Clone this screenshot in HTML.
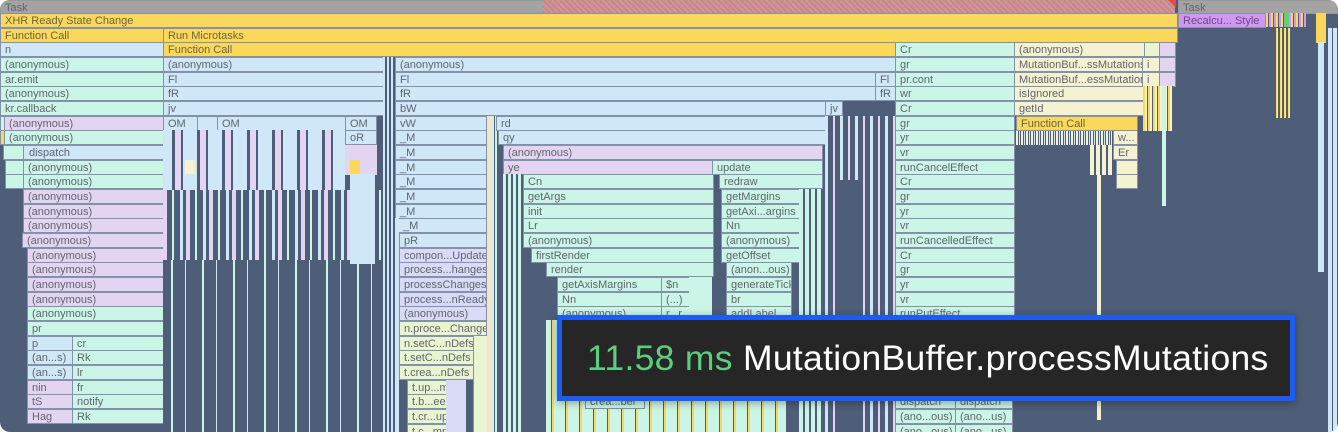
<!DOCTYPE html>
<html><head><meta charset="utf-8"><style>
html,body{margin:0;padding:0;background:#fff;}
#w{position:relative;width:1338px;height:432px;overflow:hidden;border-radius:10px;background:#4f5e78;}
.c{position:absolute;height:15px;box-sizing:border-box;border:1px solid #8392a9;font:11px "Liberation Sans",sans-serif;color:#60666e;line-height:14px;padding-left:4px;white-space:nowrap;overflow:hidden}
.g{background:#cbf5e6}.b{background:#cfe7f6}.p{background:#e3d5f1}.y{background:#fad85c;color:#6e6440}
.py{background:#f5f2d2}.l{background:#d9dbf6}.yg{background:#e9f4d0}.o{background:#f4e3c8}
.s{position:absolute;}
</style></head><body><div id="w">
<div class="c" style="left:0;top:0;width:545px;height:14px;background:#a3a3a3;border-color:#999">Task</div>
<div class="s" style="left:543px;top:0;width:632px;height:13px;background:repeating-linear-gradient(45deg,#c7878a 0 2px,#cf9597 2px 4px)"></div>
<div class="s" style="left:1168px;top:0;width:0;height:0;border-left:8px solid transparent;border-top:8px solid #e84848;"></div>
<div class="c" style="left:1178px;top:0;width:160px;height:14px;background:#a3a3a3;border-color:#999">Task</div>
<div class="c y" style="left:0;top:13px;width:1178px">XHR Ready State Change</div>
<div class="c y" style="left:0;top:28px;width:165px">Function Call</div>
<div class="c y" style="left:163px;top:28px;width:1015px">Run Microtasks</div>
<div class="c b" style="left:0;top:42px;width:165px">n</div>
<div class="c y" style="left:163px;top:42px;width:734px">Function Call</div>
<div class="c g" style="left:0;top:57px;width:165px">(anonymous)</div>
<div class="c g" style="left:0;top:72px;width:165px">ar.emit</div>
<div class="c g" style="left:0;top:86px;width:165px">(anonymous)</div>
<div class="c g" style="left:0;top:101px;width:165px">kr.callback</div>
<div class="c g" style="left:0;top:116px;width:6px"></div>
<div class="c p" style="left:4px;top:116px;width:161px">(anonymous)</div>
<div class="c y" style="left:0;top:130px;width:5px"></div>
<div class="c g" style="left:4px;top:130px;width:161px">(anonymous)</div>
<div class="c g" style="left:3px;top:145px;width:22px"></div>
<div class="c b" style="left:23px;top:145px;width:142px;padding-left:5px">dispatch</div>
<div class="c g" style="left:5px;top:160px;width:20px"></div>
<div class="c g" style="left:5px;top:174px;width:20px"></div>
<div class="c g" style="left:23px;top:160px;width:142px">(anonymous)</div>
<div class="c g" style="left:23px;top:174px;width:142px">(anonymous)</div>
<div class="c p" style="left:23px;top:189px;width:142px">(anonymous)</div>
<div class="c p" style="left:23px;top:204px;width:142px">(anonymous)</div>
<div class="c p" style="left:23px;top:218px;width:142px">(anonymous)</div>
<div class="c p" style="left:22px;top:233px;width:143px">(anonymous)</div>
<div class="c p" style="left:27px;top:248px;width:138px">(anonymous)</div>
<div class="c p" style="left:27px;top:262px;width:138px">(anonymous)</div>
<div class="c p" style="left:27px;top:277px;width:138px">(anonymous)</div>
<div class="c p" style="left:27px;top:292px;width:138px">(anonymous)</div>
<div class="c g" style="left:27px;top:306px;width:138px">(anonymous)</div>
<div class="c g" style="left:27px;top:321px;width:138px">pr</div>
<div class="c b" style="left:27px;top:336px;width:47px">p</div>
<div class="c g" style="left:72px;top:336px;width:93px">cr</div>
<div class="c b" style="left:27px;top:350px;width:47px">(an...s)</div>
<div class="c g" style="left:72px;top:350px;width:93px">Rk</div>
<div class="c b" style="left:27px;top:365px;width:47px">(an...s)</div>
<div class="c g" style="left:72px;top:365px;width:93px">lr</div>
<div class="c p" style="left:27px;top:380px;width:47px">nin</div>
<div class="c g" style="left:72px;top:380px;width:93px">fr</div>
<div class="c p" style="left:27px;top:394px;width:47px">tS</div>
<div class="c g" style="left:72px;top:394px;width:93px">notify</div>
<div class="c p" style="left:27px;top:409px;width:47px">Hag</div>
<div class="c g" style="left:72px;top:409px;width:93px">Rk</div>
<div class="c b" style="left:163px;top:57px;width:222px">(anonymous)</div>
<div class="c b" style="left:163px;top:72px;width:222px">Fl</div>
<div class="c b" style="left:163px;top:86px;width:222px">fR</div>
<div class="c b" style="left:163px;top:101px;width:222px">jv</div>
<div class="c b" style="left:163px;top:116px;width:36px">OM</div>
<div class="c b" style="left:197px;top:116px;width:22px"></div>
<div class="c b" style="left:217px;top:116px;width:130px">OM</div>
<div class="c b" style="left:345px;top:116px;width:32px">OM</div>
<div class="c b" style="left:345px;top:130px;width:32px">oR</div>
<div class="s" style="left:163px;top:130px;width:182px;height:60px;background:repeating-linear-gradient(90deg,#cfe7f6 0 9px,#4f5e78 9px 12px,#e3d5f1 12px 18px,#4f5e78 18px 20px,#cfe7f6 20px 25px)"></div>
<div class="s" style="left:163px;top:190px;width:220px;height:70px;background:repeating-linear-gradient(90deg,#e3d5f1 0 4px,#4f5e78 4px 9px,#cbf5e6 9px 11px,#4f5e78 11px 17px,#cfe7f6 17px 20px,#4f5e78 20px 23px)"></div>
<div class="s" style="left:163px;top:260px;width:220px;height:172px;background:repeating-linear-gradient(90deg,#4f5e78 0 8px,#cbf5e6 8px 10px,#4f5e78 10px 22px,#cfe7f6 22px 23px,#4f5e78 23px 31px)"></div>
<div class="s" style="left:345px;top:145px;width:32px;height:30px;background:#e3d5f1"></div>
<div class="s" style="left:350px;top:160px;width:10px;height:14px;background:#fad85c"></div>
<div class="s" style="left:185px;top:160px;width:10px;height:14px;background:#f5f2d2"></div>
<div class="s" style="left:350px;top:174px;width:25px;height:90px;background:#cfe7f6"></div>
<div class="s" style="left:383px;top:57px;width:12px;height:375px;background:repeating-linear-gradient(90deg,#cfe7f6 0 2px,#4f5e78 2px 4px)"></div>
<div class="c b" style="left:395px;top:57px;width:502px">(anonymous)</div>
<div class="c b" style="left:395px;top:72px;width:482px">Fl</div>
<div class="c b" style="left:875px;top:72px;width:22px">Fl</div>
<div class="c b" style="left:395px;top:86px;width:482px">fR</div>
<div class="c b" style="left:875px;top:86px;width:22px">fR</div>
<div class="c b" style="left:395px;top:101px;width:432px">bW</div>
<div class="c b" style="left:825px;top:101px;width:18px">jv</div>
<div class="c b" style="left:395px;top:116px;width:92px">vW</div>
<div class="c b" style="left:395px;top:130px;width:92px">_M</div>
<div class="c b" style="left:395px;top:145px;width:92px">_M</div>
<div class="c b" style="left:395px;top:160px;width:92px">_M</div>
<div class="c b" style="left:395px;top:174px;width:92px">_M</div>
<div class="c b" style="left:395px;top:189px;width:92px">_M</div>
<div class="c b" style="left:395px;top:204px;width:92px">_M</div>
<div class="c b" style="left:398px;top:218px;width:89px">_M</div>
<div class="s" style="left:395px;top:218px;width:4px;height:214px;background:#cfe7f6"></div>
<div class="c b" style="left:399px;top:233px;width:88px">pR</div>
<div class="c l" style="left:399px;top:248px;width:88px">compon...Update</div>
<div class="c l" style="left:399px;top:262px;width:88px">process...hanges</div>
<div class="c l" style="left:399px;top:277px;width:88px">processChanges</div>
<div class="c l" style="left:399px;top:292px;width:88px">process...nReady</div>
<div class="c l" style="left:399px;top:306px;width:88px">(anonymous)</div>
<div class="c yg" style="left:399px;top:321px;width:88px">n.proce...Change</div>
<div class="c yg" style="left:399px;top:336px;width:76px">n.setC...nDefs</div>
<div class="c yg" style="left:399px;top:350px;width:76px">t.setC...nDefs</div>
<div class="c yg" style="left:399px;top:365px;width:76px">t.crea...nDefs</div>
<div class="s" style="left:473px;top:336px;width:14px;height:96px;background:#e9f4d0;border-left:1px solid #8392a9"></div>
<div class="c yg" style="left:407px;top:380px;width:57px">t.up...mns</div>
<div class="c yg" style="left:407px;top:394px;width:57px">t.b...ees</div>
<div class="c yg" style="left:407px;top:409px;width:57px">t.cr...ups</div>
<div class="c yg" style="left:407px;top:424px;width:57px">t.c...mns</div>
<div class="s" style="top:380px;width:20px;height:52px;background:#d9dbf6;left:446px"></div>
<div class="s" style="left:487px;top:116px;width:5px;height:316px;background:#f4e3c8"></div>
<div class="s" style="left:492px;top:116px;width:6px;height:316px;background:repeating-linear-gradient(90deg,#cbf5e6 0 2px,#4f5e78 2px 3px)"></div>
<div class="c b" style="left:496px;top:116px;width:331px">rd</div>
<div class="c b" style="left:498px;top:130px;width:329px">qy</div>
<div class="c p" style="left:503px;top:145px;width:320px">(anonymous)</div>
<div class="c p" style="left:503px;top:160px;width:211px">ye</div>
<div class="c g" style="left:712px;top:160px;width:111px">update</div>
<div class="s" style="left:503px;top:174px;width:20px;height:258px;background:repeating-linear-gradient(90deg,#cbf5e6 0 3px,#4f5e78 3px 5px)"></div>
<div class="c g" style="left:523px;top:174px;width:191px">Cn</div>
<div class="c g" style="left:523px;top:189px;width:191px">getArgs</div>
<div class="c g" style="left:523px;top:204px;width:191px">init</div>
<div class="c g" style="left:523px;top:218px;width:191px">Lr</div>
<div class="c g" style="left:523px;top:233px;width:191px">(anonymous)</div>
<div class="c g" style="left:531px;top:248px;width:183px">firstRender</div>
<div class="c g" style="left:546px;top:262px;width:168px">render</div>
<div class="c g" style="left:557px;top:277px;width:106px">getAxisMargins</div>
<div class="c g" style="left:661px;top:277px;width:30px">$n</div>
<div class="c g" style="left:557px;top:292px;width:106px">Nn</div>
<div class="c g" style="left:661px;top:292px;width:30px">(...)</div>
<div class="c g" style="left:557px;top:306px;width:106px">(anonymous)</div>
<div class="c g" style="left:661px;top:306px;width:30px">r...r</div>
<div class="s" style="left:689px;top:277px;width:23px;height:155px;background:#cbf5e6"></div>
<div class="c g" style="left:719px;top:174px;width:104px">redraw</div>
<div class="c g" style="left:721px;top:189px;width:80px">getMargins</div>
<div class="c g" style="left:721px;top:204px;width:80px">getAxi...argins</div>
<div class="c g" style="left:721px;top:218px;width:80px">Nn</div>
<div class="c g" style="left:721px;top:233px;width:84px">(anonymous)</div>
<div class="c g" style="left:721px;top:248px;width:84px">getOffset</div>
<div class="c g" style="left:726px;top:262px;width:66px">(anon...ous)</div>
<div class="c g" style="left:726px;top:277px;width:66px">generateTick</div>
<div class="c g" style="left:726px;top:292px;width:66px">br</div>
<div class="c g" style="left:726px;top:306px;width:66px">addLabel</div>
<div class="s" style="left:808px;top:277px;width:6px;height:14px;background:#fad85c"></div>
<div class="s" style="left:807px;top:292px;width:8px;height:14px;background:#c59be6"></div>
<div class="s" style="left:799px;top:189px;width:24px;height:243px;background:repeating-linear-gradient(90deg,#cbf5e6 0 4px,#4f5e78 4px 6px)"></div>
<div class="s" style="left:546px;top:320px;width:240px;height:112px;background:repeating-linear-gradient(90deg,#cbf5e6 0 5px,#4f5e78 5px 6px,#fad85c 6px 8px,#cbf5e6 8px 14px)"></div>
<div class="c g" style="left:585px;top:394px;width:60px">crea...bel</div>
<div class="s" style="left:825px;top:116px;width:70px;height:316px;background:repeating-linear-gradient(90deg,#cfe7f6 0 3px,#4f5e78 3px 8px,#e3d5f1 8px 10px,#4f5e78 10px 15px)"></div>
<div class="s" style="left:838px;top:180px;width:25px;height:252px;background:#4f5e78"></div>
<div class="c g" style="left:895px;top:42px;width:120px">Cr</div>
<div class="c g" style="left:895px;top:57px;width:120px">gr</div>
<div class="c g" style="left:895px;top:72px;width:120px">pr.cont</div>
<div class="c g" style="left:895px;top:86px;width:120px">wr</div>
<div class="c g" style="left:895px;top:101px;width:120px">Cr</div>
<div class="c g" style="left:895px;top:116px;width:120px">gr</div>
<div class="c g" style="left:895px;top:130px;width:120px">yr</div>
<div class="c g" style="left:895px;top:145px;width:120px">vr</div>
<div class="c g" style="left:895px;top:160px;width:120px">runCancelEffect</div>
<div class="c g" style="left:895px;top:174px;width:120px">Cr</div>
<div class="c g" style="left:895px;top:189px;width:120px">gr</div>
<div class="c g" style="left:895px;top:204px;width:120px">yr</div>
<div class="c g" style="left:895px;top:218px;width:120px">vr</div>
<div class="c g" style="left:895px;top:233px;width:120px">runCancelledEffect</div>
<div class="c g" style="left:895px;top:248px;width:120px">Cr</div>
<div class="c g" style="left:895px;top:262px;width:120px">gr</div>
<div class="c g" style="left:895px;top:277px;width:120px">yr</div>
<div class="c g" style="left:895px;top:292px;width:120px">vr</div>
<div class="c g" style="left:895px;top:306px;width:120px">runPutEffect</div>
<div class="c g" style="left:895px;top:321px;width:120px"></div>
<div class="c g" style="left:895px;top:394px;width:62px">dispatch</div>
<div class="c g" style="left:955px;top:394px;width:58px">dispatch</div>
<div class="c g" style="left:895px;top:409px;width:62px">(ano...ous)</div>
<div class="c g" style="left:955px;top:409px;width:58px">(ano...us)</div>
<div class="c g" style="left:895px;top:424px;width:62px">(ano...ous)</div>
<div class="c g" style="left:955px;top:424px;width:58px">(ano...us)</div>
<div class="c py" style="left:1014px;top:42px;width:132px">(anonymous)</div>
<div class="c yg" style="left:1144px;top:42px;width:17px"></div>
<div class="c p" style="left:1159px;top:42px;width:17px"></div>
<div class="c py" style="left:1014px;top:57px;width:130px">MutationBuf...ssMutations</div>
<div class="c py" style="left:1142px;top:57px;width:19px">i</div>
<div class="c p" style="left:1159px;top:57px;width:17px"></div>
<div class="c py" style="left:1014px;top:72px;width:130px">MutationBuf...essMutations</div>
<div class="c py" style="left:1142px;top:72px;width:19px">i</div>
<div class="c p" style="left:1159px;top:72px;width:17px"></div>
<div class="c py" style="left:1014px;top:86px;width:130px">isIgnored</div>
<div class="c py" style="left:1014px;top:101px;width:130px">getId</div>
<div class="s" style="left:1143px;top:86px;width:30px;height:45px;background:repeating-linear-gradient(90deg,#fad85c 0 2px,#f5f2d2 2px 4px,#4f5e78 4px 5px)"></div>
<div class="c y" style="left:1016px;top:116px;width:122px">Function Call</div>
<div class="s" style="left:1016px;top:131px;width:96px;height:14px;background:repeating-linear-gradient(90deg,#f5f2d2 0 2px,#4f5e78 2px 3px,#cfe7f6 3px 4px,#4f5e78 4px 5px)"></div>
<div class="c py" style="left:1113px;top:130px;width:25px">w...</div>
<div class="c py" style="left:1113px;top:145px;width:25px">Er</div>
<div class="s" style="left:1090px;top:145px;width:22px;height:30px;background:repeating-linear-gradient(90deg,#f5f2d2 0 4px,#4f5e78 4px 6px)"></div>
<div class="c py" style="left:1116px;top:160px;width:22px"></div>
<div class="c py" style="left:1116px;top:174px;width:22px"></div>
<div class="s" style="left:1097px;top:175px;width:4px;height:245px;background:#f5f2d2"></div>
<div class="s" style="left:1162px;top:86px;width:4px;height:120px;background:#cbf5e6"></div>
<div class="c p" style="left:1178px;top:13px;width:88px;color:#6a4a80;background:#cf98f2">Recalcu... Style</div>
<div class="s" style="left:1266px;top:13px;width:40px;height:14px;background:repeating-linear-gradient(90deg,#fad85c 0 2px,#4f5e78 2px 3px,#cf98f2 3px 5px)"></div>
<div class="s" style="left:1284px;top:13px;width:5px;height:14px;background:#5fcf80"></div>
<div class="s" style="left:1316px;top:13px;width:10px;height:30px;background:#fad85c"></div>
<div class="s" style="left:1328px;top:28px;width:10px;height:404px;background:repeating-linear-gradient(90deg,#cfe7f6 0 4px,#4f5e78 4px 5px)"></div>
<div class="s" style="left:1276px;top:28px;width:14px;height:90px;background:repeating-linear-gradient(90deg,#fad85c 0 1px,#cbf5e6 1px 2px,#4f5e78 2px 4px)"></div>
<div class="s" style="left:1318px;top:42px;width:6px;height:230px;background:#cfe7f6"></div>
<div class="s" style="left:557px;top:315px;width:738px;height:86px;box-sizing:border-box;border:5px solid #1d5cf0;background:#262626;box-shadow:0 2px 8px rgba(0,0,0,.35);font:35.5px 'Liberation Sans',sans-serif;line-height:76px;white-space:nowrap;padding-left:25px;color:#fff;letter-spacing:0.3px"><span style="color:#5ccf7f">11.58 ms</span> MutationBuffer.processMutations</div>
</div></body></html>
